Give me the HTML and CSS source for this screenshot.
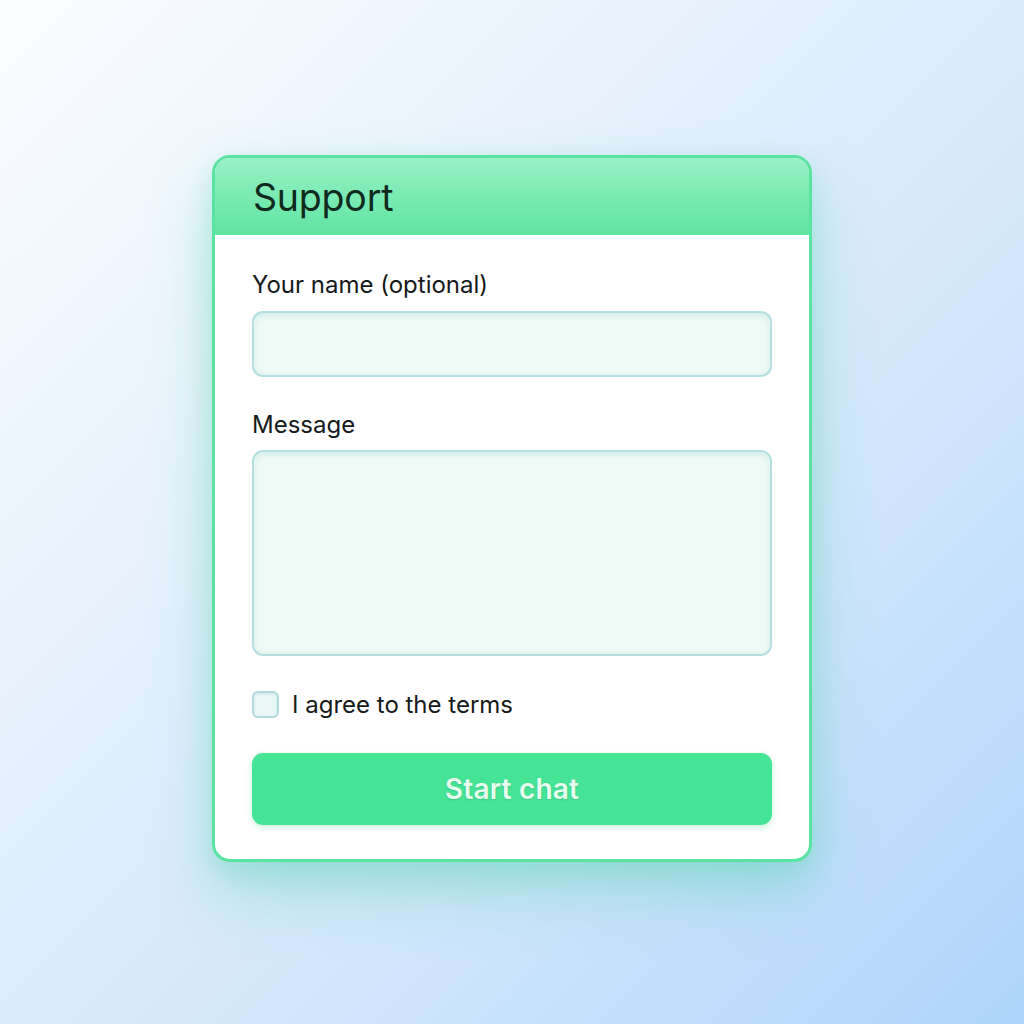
FILE: index.html
```html
<!DOCTYPE html>
<html>
<head>
<meta charset="utf-8">
<link rel="stylesheet" href="styles.css">
</head>
<body>
<main class="page">
  <section class="card">
    <header class="card-head">
      <h1 class="title">Support</h1>
    </header>
    <form class="card-body">
      <label class="label">Your name (optional)</label>
      <div class="input"></div>
      <label class="label label-gap">Message</label>
      <div class="input textarea"></div>
      <div class="check-row">
        <span class="checkbox"></span>
        <span class="check-text">I agree to the terms</span>
      </div>
      <div class="button">Start chat</div>
    </form>
  </section>
</main>
</body>
</html>
```
FILE: styles.css
```css
* { box-sizing: border-box; }
html, body { margin: 0; padding: 0; }
body {
  width: 1024px;
  height: 1024px;
  overflow: hidden;
  font-family: Inter, "Noto Sans", sans-serif;
  background: linear-gradient(135deg, #fbfdff 0%, #e6f1fc 35%, #cde4fb 70%, #aed4fb 100%);
}
.page {
  display: flex;
  justify-content: center;
  padding-top: 155px;
}
.card {
  width: 600px;
  height: 707px;
  background: #ffffff;
  border: 3px solid #5ae3a0;
  border-radius: 18px;
  overflow: hidden;
  box-shadow: 0 30px 60px rgba(70, 210, 170, 0.35), 0 10px 24px rgba(70, 200, 160, 0.2);
}
.card-head {
  height: 77px;
  background: linear-gradient(180deg, #9af0c6 0%, #7aebb3 50%, #5fe4a1 100%);
  display: flex;
  align-items: center;
  padding-left: 38px;
}
.title {
  margin: 0;
  font-size: 37.5px;
  font-weight: 400;
  color: #0f2a1c;
  letter-spacing: -0.2px;
  padding-top: 2px;
}
.card-body {
  display: flex;
  flex-direction: column;
  padding: 36px 37px 0 37px;
}
.label {
  font-size: 24px;
  line-height: 28px;
  color: #161a1b;
  margin-bottom: 12px;
}
.label-gap { margin-top: 34px; margin-bottom: 11px; }
.input {
  height: 66px;
  border-radius: 11px;
  background: #eefaf5;
  border: 2px solid #b3dfe0;
  box-shadow: inset 0 2px 6px rgba(120, 200, 200, 0.25);
}
.textarea { height: 206px; }
.check-row {
  display: flex;
  align-items: center;
  margin-top: 34px;
  height: 28px;
}
.checkbox {
  width: 27px;
  height: 27px;
  border-radius: 6px;
  background: #eaf7f6;
  border: 2px solid #b1dadd;
  box-shadow: inset 0 1px 3px rgba(120, 190, 200, 0.3);
  margin-right: 13px;
}
.check-text {
  font-size: 24px;
  color: #161a1b;
}
.button {
  margin-top: 35px;
  height: 72px;
  border-radius: 11px;
  background: #46e596;
  color: #e8fbef;
  font-size: 28px;
  font-weight: 600;
  letter-spacing: 0.2px;
  display: flex;
  align-items: center;
  justify-content: center;
  text-shadow: 0 1px 2px rgba(20, 120, 70, 0.25);
  box-shadow: 0 2px 6px rgba(60, 210, 140, 0.3);
}
```
